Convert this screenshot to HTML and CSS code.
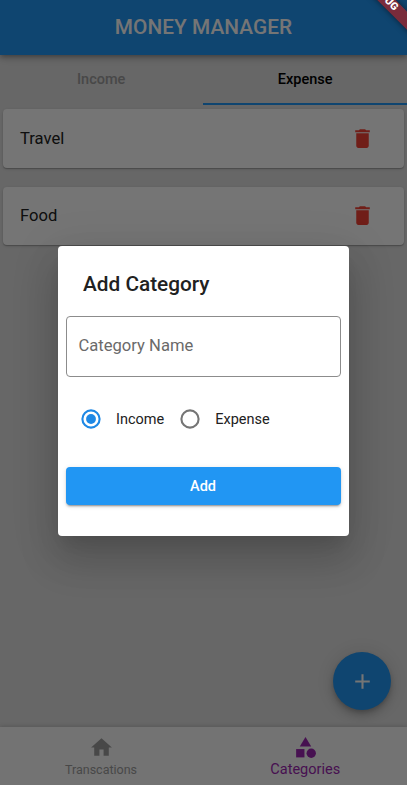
FILE: index.html
```html
<!DOCTYPE html>
<html lang="en">
<head>
<meta charset="utf-8">
<title>Money Manager</title>
<link rel="stylesheet" href="styles.css">
</head>
<body>
<div class="app">
  <header class="appbar"><h1>MONEY MANAGER</h1></header>
  <nav class="tabs">
    <div class="tab">Income</div>
    <div class="tab active">Expense</div>
  </nav>
  <main class="list">
    <div class="card"><span>Travel</span>
      <svg class="trash" viewBox="0 0 24 24"><path d="M6 19c0 1.1.9 2 2 2h8c1.1 0 2-.9 2-2V7H6v12zM19 4h-3.5l-1-1h-5l-1 1H5v2h14V4z"/></svg>
    </div>
    <div class="card"><span>Food</span>
      <svg class="trash" viewBox="0 0 24 24"><path d="M6 19c0 1.1.9 2 2 2h8c1.1 0 2-.9 2-2V7H6v12zM19 4h-3.5l-1-1h-5l-1 1H5v2h14V4z"/></svg>
    </div>
  </main>
  <button class="fab" aria-label="Add"><svg viewBox="0 0 24 24"><path d="M19 13h-6v6h-2v-6H5v-2h6V5h2v6h6v2z"/></svg></button>
  <footer class="bottom">
    <div class="item">
      <svg viewBox="0 0 24 24"><path d="M10 20v-6h4v6h5v-8h3L12 3 2 12h3v8z"/></svg>
      <span>Transcations</span>
    </div>
    <div class="item selected">
      <svg viewBox="0 0 24 24"><path d="M12 2l-5.5 9h11z"/><circle cx="17.5" cy="17.5" r="4.5"/><path d="M3 13.5h8v8H3z"/></svg>
      <span>Categories</span>
    </div>
  </footer>
</div>
<div class="barrier">
  <section class="dialog">
    <h2>Add Category</h2>
    <div class="field">Category Name</div>
    <div class="radios">
      <svg class="radio checked" viewBox="0 0 20 20"><circle class="ring" cx="10" cy="10" r="8.6"/><circle cx="10" cy="10" r="4.9"/></svg><span class="label">Income</span>
      <svg class="radio" viewBox="0 0 20 20"><circle class="ring" cx="10" cy="10" r="8.6"/></svg><span class="label">Expense</span>
    </div>
    <button class="add">Add</button>
  </section>
</div>
<div class="banner-clip"><div class="banner">DEBUG</div></div>
</body>
</html>
```
FILE: styles.css
```css
* { box-sizing: border-box; }
body { margin: 0; font-family: Roboto, sans-serif; color: #212121; overflow: hidden; }
h1, h2 { margin: 0; font-weight: 500; }
button { border: 0; padding: 0; font-family: inherit; }
svg { display: block; fill: currentColor; }

.app { position: relative; isolation: isolate; display: flex; flex-direction: column; height: 785px; background: #e0e0e0; }
.appbar { position: relative; z-index: 1; display: flex; align-items: center; justify-content: center; height: 55px; padding-bottom: 2px; background: #2196f3; color: #fff; box-shadow: 0 2px 4px -1px rgba(0,0,0,.2), 0 4px 5px rgba(0,0,0,.14), 0 1px 10px rgba(0,0,0,.12); }
.appbar h1 { font-size: 20.8px; line-height: 24px; letter-spacing: .05px; }
.tabs { display: grid; grid-template-columns: 203.4px 1fr; height: 50px; }
.tab { display: flex; align-items: center; justify-content: center; padding-right: 1px; font-size: 14.5px; font-weight: 500; color: #9e9e9e; border-bottom: 2px solid transparent; }
.tab.active { padding-right: 0; color: #000; border-color: #2196f3; }

.list { flex: 1; display: flex; flex-direction: column; gap: 19px; padding: 4px 3px; }
.card { display: flex; align-items: center; justify-content: space-between; height: 58.5px; padding: 0 29.5px 0 17px; border-radius: 4px; background: #fff; font-size: 16.6px; box-shadow: 0 1px 1px rgba(0,0,0,.2), 0 1px 3px rgba(0,0,0,.14); }
.trash { width: 25px; height: 25px; color: #f44336; }

.fab { position: absolute; right: 16px; bottom: 75px; display: flex; align-items: center; justify-content: center; width: 58px; height: 58px; border-radius: 50%; background: #2196f3; color: #fff; box-shadow: 0 3px 5px -1px rgba(0,0,0,.2), 0 6px 10px rgba(0,0,0,.14), 0 1px 18px rgba(0,0,0,.12); }
.fab svg { width: 25px; height: 25px; }

.bottom { display: grid; grid-template-columns: 1fr 1fr; height: 58px; background: #fafafa; box-shadow: 0 -1px 4px rgba(0,0,0,.15); }
.item { display: flex; flex-direction: column; align-items: center; padding: 8px 1.5px 0 0; font-size: 12.5px; color: #9e9e9e; }
.item svg { width: 25px; height: 25px; }
.item span { line-height: 20px; }
.item.selected { padding-right: 0; color: #9c27b0; font-size: 14.5px; }
.item.selected span { line-height: 19px; }

.barrier { position: absolute; inset: 0; display: flex; align-items: center; justify-content: center; background: rgba(0,0,0,.54); }
.dialog { width: 291px; height: 290px; margin-bottom: 3px; padding: 26px 8px 0; border-radius: 4px; background: #fff; box-shadow: 0 11px 15px -7px rgba(0,0,0,.1), 0 24px 38px 3px rgba(0,0,0,.14), 0 9px 46px 8px rgba(0,0,0,.08); }
.dialog h2 { padding-left: 17px; font-size: 20.8px; line-height: 25px; letter-spacing: 0; }
.field { display: flex; align-items: center; height: 61px; margin-top: 19px; padding: 0 0 3px 11.5px; border: 1px solid #8c8c8c; border-radius: 4px; font-size: 16.6px; color: #6a6a6a; }
.radios { display: flex; align-items: center; height: 50px; margin-top: 17px; padding-left: 15px; }
.radio { width: 20px; height: 20px; fill: #1e88e5; color: #757575; }
.radio.checked { color: #1e88e5; }
.ring { fill: none; stroke: currentColor; stroke-width: 2.1; }
.label { margin: 0 15px; font-size: 14.5px; }
.checked + .label { margin-right: 16px; }
.add { display: block; width: 100%; height: 37.5px; margin-top: 23px; padding: 1px 1px 0 0; border-radius: 4px; background: #2196f3; color: #fff; font-size: 14.5px; font-weight: 500; box-shadow: 0 3px 1px -2px rgba(0,0,0,.2), 0 2px 2px rgba(0,0,0,.14), 0 1px 5px rgba(0,0,0,.12); }

.banner-clip { position: absolute; top: 0; right: 0; width: 60px; height: 60px; overflow: hidden; }
.banner { position: absolute; top: -9px; left: -13px; width: 100px; height: 12.5px; transform: rotate(45deg); background: rgba(183,28,28,.63); box-shadow: 0 0 6px rgba(0,0,0,.5); color: #fff; font-size: 10.6px; font-weight: 900; line-height: 12.5px; text-align: center; }
```
